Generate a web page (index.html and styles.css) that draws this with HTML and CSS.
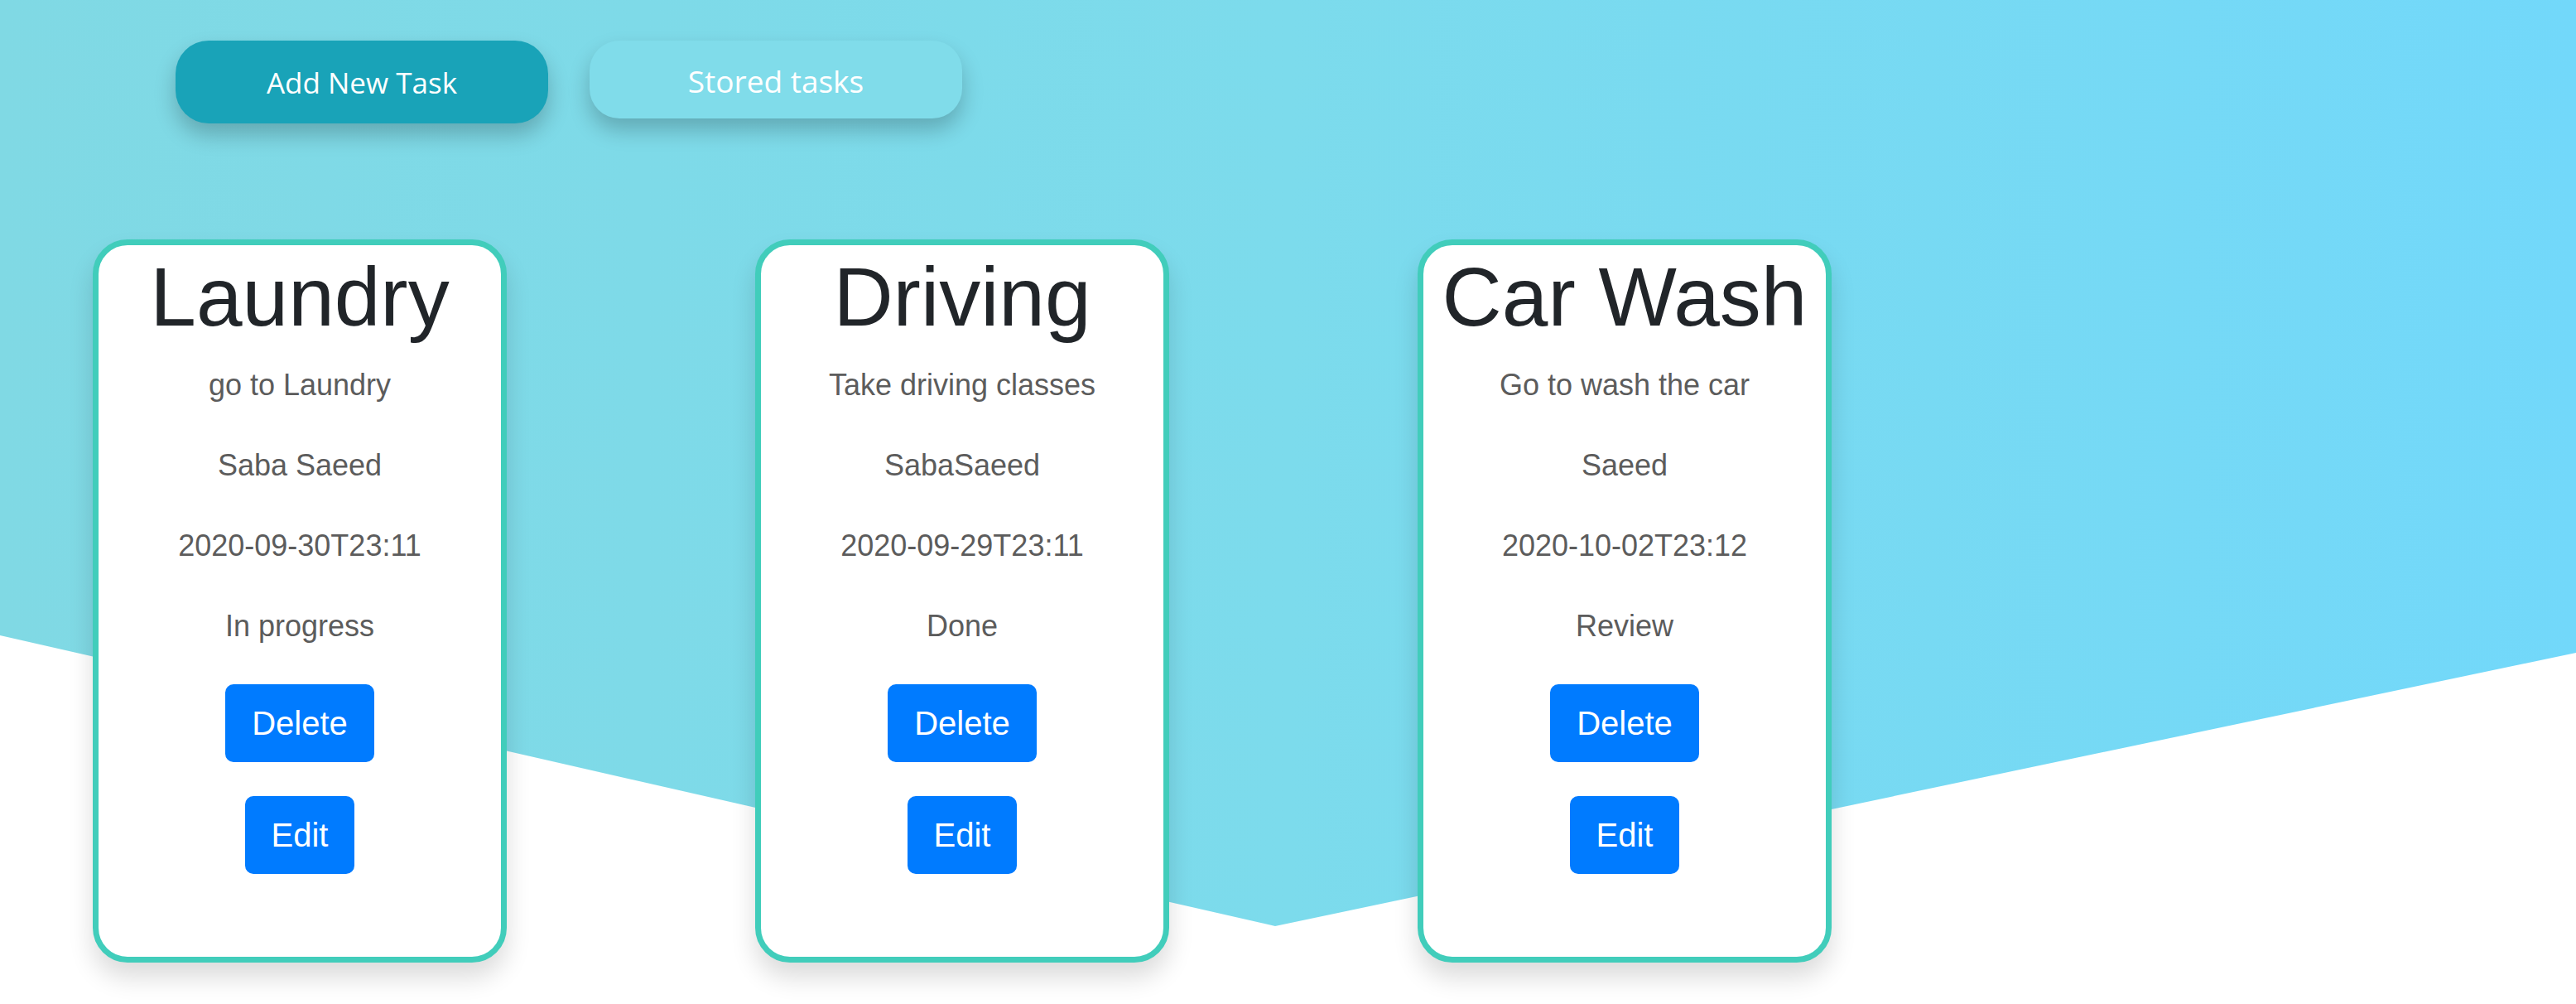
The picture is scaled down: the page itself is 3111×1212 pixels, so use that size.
FILE: index.html
```html
<!DOCTYPE html>
<html lang="en">
<head>
<meta charset="utf-8">
<title>Tasks</title>
<link rel="stylesheet" href="styles.css">
</head>
<body>
<div class="page">
  <nav class="nav">
    <button class="nav-btn nav-btn-active">Add New Task</button>
    <button class="nav-btn nav-btn-light">Stored tasks</button>
  </nav>
  <main class="cards">
    <section class="card">
      <h1 class="card-title">Laundry</h1>
      <p class="card-text">go to Laundry</p>
      <p class="card-text">Saba Saeed</p>
      <p class="card-text">2020-09-30T23:11</p>
      <p class="card-text">In progress</p>
      <button class="btn btn-delete">Delete</button>
      <button class="btn btn-edit">Edit</button>
    </section>
    <section class="card">
      <h1 class="card-title">Driving</h1>
      <p class="card-text">Take driving classes</p>
      <p class="card-text">SabaSaeed</p>
      <p class="card-text">2020-09-29T23:11</p>
      <p class="card-text">Done</p>
      <button class="btn btn-delete">Delete</button>
      <button class="btn btn-edit">Edit</button>
    </section>
    <section class="card">
      <h1 class="card-title">Car Wash</h1>
      <p class="card-text">Go to wash the car</p>
      <p class="card-text">Saeed</p>
      <p class="card-text">2020-10-02T23:12</p>
      <p class="card-text">Review</p>
      <button class="btn btn-delete">Delete</button>
      <button class="btn btn-edit">Edit</button>
    </section>
  </main>
</div>
</body>
</html>
```
FILE: styles.css
```css
* { box-sizing: border-box; }
html, body { margin: 0; padding: 0; background: #ffffff; }
body { font-family: "Liberation Sans", Arial, sans-serif; }

.page {
  position: relative;
  min-height: 1212px;
  overflow: hidden;
}
.page::before {
  content: "";
  position: absolute;
  left: 0; top: 0; right: 0; height: 1212px;
  background: linear-gradient(to right, #80d9e4 0%, #7cdbec 50%, #72d8fa 100%);
  clip-path: polygon(0 0, 100% 0, 100% 788px, 1540px 1118px, 0 767px);
  z-index: 0;
}

.nav {
  position: relative;
  z-index: 1;
  display: flex;
  align-items: flex-start;
  gap: 50px;
  padding: 49px 0 0 212px;
}
.nav-btn {
  width: 450px;
  border: none;
  color: #ffffff;
  font-family: "Open Sans", sans-serif;
  font-size: 35px;
  font-weight: 400;
  box-shadow: 0 14px 26px rgba(0, 0, 0, 0.22);
  padding: 0;
}
.nav-btn-active {
  height: 100px;
  background: #19a3b8;
  border-radius: 40px;
}
.nav-btn-light {
  height: 94px;
  background: #80dcea;
  border-radius: 36px;
  font-size: 37px;
  padding-top: 2px;
}

.cards {
  position: relative;
  z-index: 1;
  display: flex;
  gap: 300px;
  padding: 140px 0 0 112px;
}
.card {
  width: 500px;
  background: #ffffff;
  border: 7px solid #41cdbb;
  border-radius: 42px;
  box-shadow: 0 18px 30px rgba(0, 0, 0, 0.14);
  text-align: center;
  padding: 2px 0 100px;
  display: flex;
  flex-direction: column;
  align-items: center;
}
.card-title {
  margin: 0 0 20px;
  font-size: 100px;
  line-height: 120px;
  font-weight: 400;
  color: #212529;
  white-space: nowrap;
}
.card-text {
  margin: 0 0 43px;
  font-size: 36px;
  line-height: 54px;
  color: #5c5c5c;
}
.btn {
  font-family: "Liberation Sans", Arial, sans-serif;
  font-size: 40px;
  line-height: 60px;
  padding: 15px 30px;
  border: 2px solid #007bff;
  background: #007bff;
  color: #ffffff;
  border-radius: 10px;
}
.btn-delete { margin-bottom: 41px; }
```
